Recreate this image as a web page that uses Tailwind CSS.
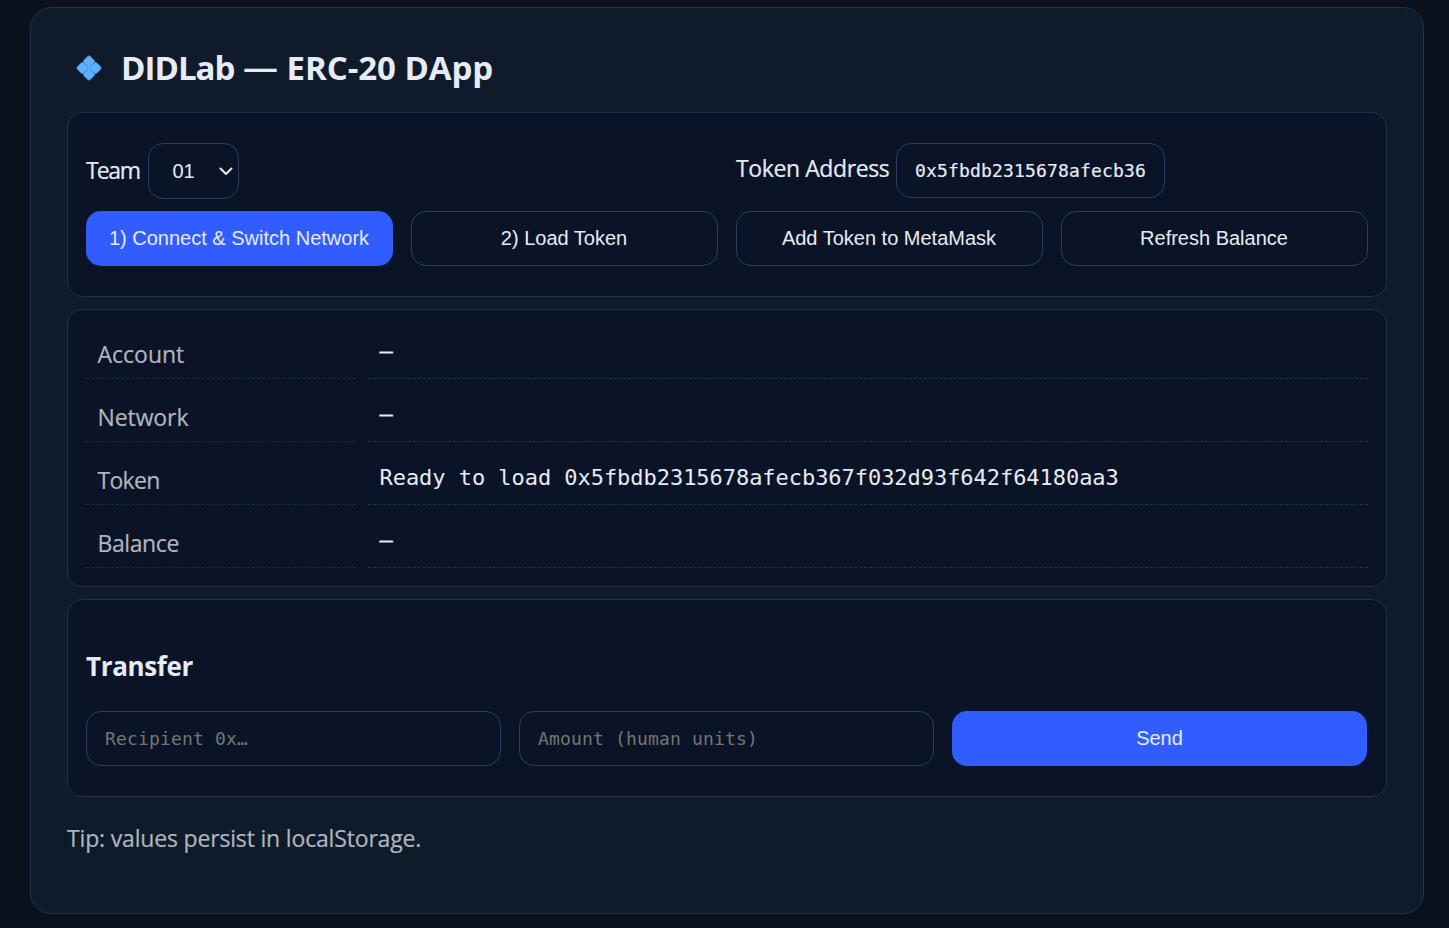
<!DOCTYPE html>
<html lang="en">
<head>
<meta charset="utf-8">
<title>DIDLab — ERC-20 DApp</title>
<script src="https://cdn.jsdelivr.net/npm/@tailwindcss/browser@4"></script>
</head>
<body class="h-[928px] overflow-hidden bg-[#0b111d] pt-[7px] font-['Open_Sans','Noto_Sans',sans-serif] text-[23px] leading-8 text-[#e6ebf5]">
<main class="ml-[30px] h-[907px] w-[1394px] rounded-[21px] border border-[#22304a] bg-[#0f1b2a] px-9 pt-9">
  <h1 class="flex h-12 items-center pl-[8px] text-[33px] font-bold">
    <svg class="mr-[18px] size-[28px]" viewBox="0 0 27 27">
      <g fill="#5eb1ff" stroke="#479bf2" stroke-width=".6">
        <rect x="-4.3" y="-4.3" width="8.6" height="8.6" rx="1.8" transform="translate(13.5 7.2) rotate(45)"/>
        <rect x="-4.3" y="-4.3" width="8.6" height="8.6" rx="1.8" transform="translate(7.2 13.5) rotate(45)"/>
        <rect x="-4.3" y="-4.3" width="8.6" height="8.6" rx="1.8" transform="translate(19.8 13.5) rotate(45)"/>
        <rect x="-4.3" y="-4.3" width="8.6" height="8.6" rx="1.8" transform="translate(13.5 19.8) rotate(45)"/>
      </g>
      <circle cx="13.5" cy="13.5" r="1.6" fill="#5eb1ff"/>
    </svg>
    <span class="-mt-1 tracking-[-0.05px]"><span class="tracking-[-0.95px]">DIDLab</span> <span class="text-[35px] leading-none font-semibold">—</span> ERC-20 DApp</span>
  </h1>

  <section class="mt-5 h-[185px] rounded-[15px] border border-[#22304a] bg-[#0b1426] px-[18px] pt-[30px]">
    <div class="grid grid-cols-2 gap-x-[18px]">
      <label class="flex h-14 items-center"><span class="-mt-[3px] w-[62px] tracking-[-1.3px] [-webkit-text-stroke:0.2px]"><span class="tracking-[-2px]">T</span>eam</span>
        <span class="flex h-14 w-[91px] items-center justify-between rounded-[15px] border border-[#2c3d62] pr-[5px] pl-[23.500px] font-['Liberation_Sans',sans-serif] text-[20px]">01
          <svg class="size-[14px]" viewBox="0 0 14 14" fill="none" stroke="#e6ebf5" stroke-width="2" stroke-linecap="round" stroke-linejoin="round"><path d="M1.500 4.500 7 10l5.500-5.500"/></svg>
        </span>
      </label>
      <label class="flex h-[55px] items-center"><span class="-mt-[5px] w-[160px] tracking-[-0.4px] [-webkit-text-stroke:0.2px]">Token Address</span>
        <span class="flex h-[55px] w-[269px] items-center rounded-[15px] border border-[#2c3d62] pl-[18px] font-['DejaVu_Sans_Mono',monospace] text-[18px] tracking-[0.165px] [-webkit-text-stroke:0.2px]">0x5fbdb2315678afecb36</span>
      </label>
    </div>
    <div class="mt-3 grid grid-cols-4 gap-[18px] font-['Liberation_Sans',sans-serif] text-[20px]">
      <button class="h-[55px] rounded-[15px] bg-[#315cff] pr-px pb-[2px]">1) Connect &amp; Switch Network</button>
      <button class="h-[55px] rounded-[15px] border border-[#2c3d62] pr-px pb-[2px]">2) Load Token</button>
      <button class="h-[55px] rounded-[15px] border border-[#2c3d62] pr-px pb-[2px]">Add Token to MetaMask</button>
      <button class="h-[55px] rounded-[15px] border border-[#2c3d62] pr-px pb-[2px]">Refresh Balance</button>
    </div>
  </section>

  <section class="mt-3 grid h-[278px] auto-rows-[63px] grid-cols-[270px_1fr] gap-x-3 rounded-[15px] border border-[#22304a] bg-[#0b1426] px-[18px] pt-[6px]">
    <div class="border-b border-dashed border-[#1d2a41] pt-[22px] pl-[11.500px] text-[#b0b5bf] [-webkit-text-stroke:0.2px]">Account</div>
    <div class="border-b border-dashed border-[#22304a] pt-[19px] pl-[11.500px] font-['DejaVu_Sans_Mono',monospace] text-[22px] [-webkit-text-stroke:0.4px]">—</div>
    <div class="border-b border-dashed border-[#1d2a41] pt-[22px] pl-[11.500px] tracking-[-0.1px] text-[#b0b5bf] [-webkit-text-stroke:0.2px]">Network</div>
    <div class="border-b border-dashed border-[#22304a] pt-[19px] pl-[11.500px] font-['DejaVu_Sans_Mono',monospace] text-[22px] [-webkit-text-stroke:0.4px]">—</div>
    <div class="border-b border-dashed border-[#1d2a41] pt-[22px] pl-[11.500px] tracking-[-0.7px] text-[#b0b5bf] [-webkit-text-stroke:0.2px]">Token</div>
    <div class="border-b border-dashed border-[#22304a] pt-[20px] pl-[11.500px] font-['DejaVu_Sans_Mono',monospace] text-[22px] tracking-[-0.044px]">Ready to load 0x5fbdb2315678afecb367f032d93f642f64180aa3</div>
    <div class="border-b border-dashed border-[#1d2a41] pt-[22px] pl-[11.500px] tracking-[-0.4px] text-[#b0b5bf] [-webkit-text-stroke:0.2px]">Balance</div>
    <div class="border-b border-dashed border-[#22304a] pt-[19px] pl-[11.500px] font-['DejaVu_Sans_Mono',monospace] text-[22px] [-webkit-text-stroke:0.4px]">—</div>
  </section>

  <section class="mt-3 h-[198px] rounded-[15px] border border-[#22304a] bg-[#0b1426] px-[18px] pt-[50px]">
    <h2 class="text-[26px] font-bold tracking-[-0.35px]">Transfer</h2>
    <div class="mt-[29px] grid grid-cols-[repeat(3,415px)] gap-[18px] font-['DejaVu_Sans_Mono',monospace] text-[18px]">
      <div class="flex h-[55px] items-center rounded-[15px] border border-[#2c3d62] pl-[18px] tracking-[0.165px] text-[#757575]">Recipient 0x…</div>
      <div class="flex h-[55px] items-center rounded-[15px] border border-[#2c3d62] pl-[18px] tracking-[0.165px] text-[#757575]">Amount (human units)</div>
      <button class="h-[55px] rounded-[15px] bg-[#315cff] pb-[2px] font-['Liberation_Sans',sans-serif] text-[20px]">Send</button>
    </div>
  </section>

  <p class="mt-[25px] tracking-[-0.17px] text-[#b0b5bf] [-webkit-text-stroke:0.2px]">Tip: values persist in localStorage.</p>
</main>
</body>
</html>
